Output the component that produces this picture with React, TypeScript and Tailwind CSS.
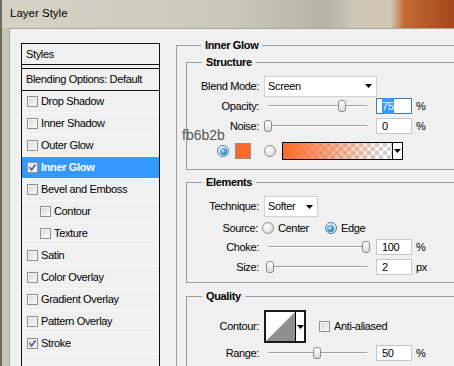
import React from "react";

type Item = { label: string; checked?: boolean; active?: boolean; indent?: boolean };

const items: Item[] = [
  { label: "Drop Shadow" },
  { label: "Inner Shadow" },
  { label: "Outer Glow" },
  { label: "Inner Glow", checked: true, active: true },
  { label: "Bevel and Emboss" },
  { label: "Contour", indent: true },
  { label: "Texture", indent: true },
  { label: "Satin" },
  { label: "Color Overlay" },
  { label: "Gradient Overlay" },
  { label: "Pattern Overlay" },
  { label: "Stroke", checked: true },
];

function Check({ checked }: { checked?: boolean }) {
  return (
    <span className="flex h-[11px] w-[11px] shrink-0 items-center justify-center border border-[#8e8f8f] bg-[linear-gradient(135deg,#d8d8d8,#fbfbfb)] shadow-[inset_0_0_0_1px_#f6f6f6]">
      {checked && (
        <svg width="9" height="9" viewBox="0 0 9 9">
          <path d="M1.5 4.3 L3.6 7 L7.6 1.4" fill="none" stroke="#4a5a94" strokeWidth="1.6" />
        </svg>
      )}
    </span>
  );
}

function Radio({ on }: { on?: boolean }) {
  return (
    <span
      className={`flex h-[12px] w-[12px] shrink-0 items-center justify-center rounded-full border bg-[radial-gradient(circle_at_35%_35%,#ffffff,#d2d2d2)] ${
        on ? "border-[#3d7bad]" : "border-[#8e8f8f]"
      }`}
    >
      {on && (
        <span className="h-[7px] w-[7px] rounded-full bg-[radial-gradient(circle_at_40%_40%,#c6ecff_0%,#3c9ee0_45%,#174f86_100%)]" />
      )}
    </span>
  );
}

function Tri() {
  return (
    <svg width="7" height="4" viewBox="0 0 7 4">
      <polygon points="0,0 7,0 3.5,4" fill="#000" />
    </svg>
  );
}

function Select({ value, w }: { value: string; w: string }) {
  return (
    <div className={`ml-[5px] flex h-[21px] items-center justify-between border border-[#d0d0d0] bg-white pl-[3px] pr-[4px] ${w}`}>
      <span>{value}</span>
      <Tri />
    </div>
  );
}

function Slider({ value }: { value: number }) {
  return (
    <div className="relative ml-[6px] h-[18px] w-[107px] shrink-0 pt-[8px]">
      <div className="ml-[3px] mr-[5px] h-[2px] border-t border-[#a0a0a0] bg-white" />
      <div
        className="absolute top-[3px] h-[12px] w-[8px] rounded-[3px] border border-[#8a8a8a] bg-[linear-gradient(#ffffff,#d9d9d9)]"
        style={{ left: 3 + value * 0.98 - 4 }}
      />
    </div>
  );
}

function Field({ value, focused }: { value: string; focused?: boolean }) {
  return (
    <div
      className={`ml-[4px] flex h-[16px] w-[36px] items-center border bg-white pl-[5px] ${
        focused ? "border-[#3c7fb1]" : "border-[#c4c6ca]"
      }`}
    >
      <span className={focused ? "bg-[#3399ff] text-white" : ""}>{value}</span>
    </div>
  );
}

function Label({ children }: { children: React.ReactNode }) {
  return <span className="w-[72px] shrink-0 text-right">{children}</span>;
}

function SliderRow({ label, value, unit, focused, cls }: { label: string; value: number; unit: string; focused?: boolean; cls: string }) {
  return (
    <div className={`flex items-center ${cls}`}>
      <Label>{label}</Label>
      <Slider value={value} />
      <Field value={String(value)} focused={focused} />
      <span className="ml-[4px]">{unit}</span>
    </div>
  );
}

function Group({ title, cls, children }: { title: string; cls: string; children: React.ReactNode }) {
  return (
    <fieldset className={`border border-[#9c9c9c] ${cls}`}>
      <legend className="ml-[15px] px-[4px] font-bold leading-[14px]">{title}</legend>
      {children}
    </fieldset>
  );
}

export default function App() {
  return (
    <div className="relative flex h-[366px] w-[454px] flex-col overflow-hidden border-l-2 border-[#6e6b62] bg-[#cbc6b6] font-['Liberation_Sans',Arial,sans-serif] text-[11px] tracking-[-0.35px] text-black">
      {/* title bar */}
      <div className="flex h-[28px] shrink-0 items-center bg-[linear-gradient(to_right,#d6d2c6_0%,#cdc8b9_50%,#b7b2a4_72%,#cdc7b7_78%,#d2c7b5_86%,#c36a35_89%,#a4461b_100%)] pl-[8px] text-[11.5px] tracking-normal">
        Layer Style
      </div>

      <div className="flex flex-1 pl-[7px]">
        <div className="flex flex-1 items-start border-l border-t border-[#a8a498] bg-[#f0f0f0] pl-[11px] pt-[9px]">
          {/* styles list */}
          <div className="mt-[5px] h-[400px] w-[139px] shrink-0 border border-[#111]">
            <div className="flex h-[21px] items-center border-b border-[#111] pl-[4px]">Styles</div>
            <div className="h-[4px] border-b border-[#111]" />
            <div className="flex h-[22px] items-center border-b border-[#111] pl-[4px]">Blending Options: Default</div>
            {items.map((it) => (
              <div
                key={it.label}
                className={`flex h-[22px] items-center gap-[3px] border-b border-[#fbfbfb] ${it.indent ? "pl-[18px]" : "pl-[5px]"} ${
                  it.active ? "bg-[#3399ff] font-bold text-white" : ""
                }`}
              >
                <Check checked={it.checked} />
                <span>{it.label}</span>
              </div>
            ))}
          </div>

          {/* settings */}
          <Group title="Inner Glow" cls="ml-[16px] w-[300px] shrink-0 pl-[9px] pb-[40px]">
            <Group title="Structure" cls="mt-[3px] w-[280px] pb-[9px]">
              <div className="mt-[6px] flex h-[22px] items-center">
                <Label>Blend Mode:</Label>
                <Select value="Screen" w="w-[113px]" />
              </div>
              <SliderRow label="Opacity:" value={75} unit="%" focused cls="h-[18px]" />
              <SliderRow label="Noise:" value={0} unit="%" cls="mt-[2px] h-[18px]" />
              <div className="mt-[7px] flex h-[18px] items-center pl-[30px]">
                <Radio on />
                <span className="ml-[6px] h-[16px] w-[16px] border border-[#8e8e8e] bg-[#fb6b2b]" />
                <span className="ml-[13px]">
                  <Radio />
                </span>
                <div className="ml-[6px] flex h-[18px] w-[121px] border border-black">
                  <div className="flex-1 bg-[linear-gradient(to_right,#fb6b2b_0%,rgba(251,107,43,0.6)_40%,rgba(251,107,43,0)_92%),repeating-conic-gradient(#cfcfcf_0_25%,#ffffff_0_50%)] [background-size:100%_100%,8px_8px]" />
                  <div className="flex w-[10px] items-center justify-center border-l border-black bg-white">
                    <Tri />
                  </div>
                </div>
              </div>
            </Group>

            <Group title="Elements" cls="mt-[5px] w-[280px] pb-[6px]">
              <div className="mt-[7px] flex h-[21px] items-center">
                <Label>Technique:</Label>
                <Select value="Softer" w="w-[54px]" />
              </div>
              <div className="mt-[1px] flex h-[20px] items-center">
                <span className="w-[71px] shrink-0 text-right">Source:</span>
                <span className="ml-[4px]">
                  <Radio />
                </span>
                <span className="ml-[4px]">Center</span>
                <span className="ml-[16px]">
                  <Radio on />
                </span>
                <span className="ml-[4px]">Edge</span>
              </div>
              <SliderRow label="Choke:" value={100} unit="%" cls="h-[18px]" />
              <SliderRow label="Size:" value={2} unit="px" cls="mt-[2px] h-[18px]" />
            </Group>

            <Group title="Quality" cls="mt-[6px] w-[280px] pb-[10px]">
              <div className="mt-[7px] flex h-[33px] items-center">
                <Label>Contour:</Label>
                <div className="ml-[5px] flex h-[33px] w-[42px] border-2 border-[#1a1a1a]">
                  <svg width="29" height="29" viewBox="0 0 29 29" className="bg-white">
                    <polygon points="0,29 29,0 29,29" fill="#8f8f8f" />
                  </svg>
                  <div className="flex flex-1 items-center justify-center border-l border-black bg-white">
                    <Tri />
                  </div>
                </div>
                <span className="ml-[13px]">
                  <Check />
                </span>
                <span className="ml-[4px]">Anti-aliased</span>
              </div>
              <SliderRow label="Range:" value={50} unit="%" cls="mt-[1px] h-[18px]" />
            </Group>
          </Group>
        </div>
      </div>

      {/* colour annotation */}
      <span className="absolute left-[180px] top-[125px] text-[14px] tracking-normal text-[#555]">fb6b2b</span>
    </div>
  );
}
